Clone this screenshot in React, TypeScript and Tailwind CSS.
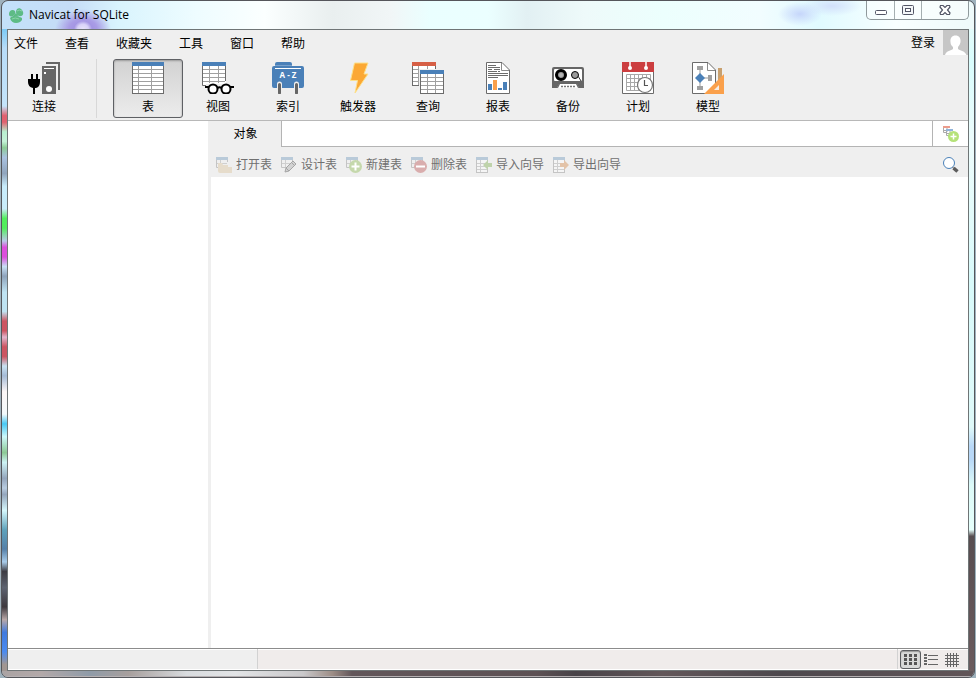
import React from 'react';

const TableIcon = () => (
  <svg viewBox="0 0 32 32" className="w-8 h-8" shapeRendering="crispEdges">
    <rect width="32" height="32" fill="#6b6b6b" />
    <rect x="1" y="4" width="30" height="27" fill="#fff" />
    <rect width="32" height="4" fill="#4a80b8" />
    <path d="M1 7.5H31M1 11.5H31M1 15.5H31M1 19.5H31M1 23.5H31M1 27.5H31M6.5 4V31M19.5 4V31" stroke="#a0a0a0" />
  </svg>
);

const ConnectionIcon = () => (
  <svg viewBox="0 0 32 32" className="w-8 h-8">
    <path d="M18 1H31V28" fill="none" stroke="#666" strokeWidth="2" />
    <rect x="14" y="4" width="14" height="28" fill="#666" />
    <rect x="16" y="6" width="10" height="1" fill="#fff" />
    <rect x="16" y="10" width="2" height="2" fill="#fff" />
    <circle cx="21" cy="27" r="3" fill="#fff" />
    <path d="M3 12H5V17H8V12H10V17H12V20Q12 25 8 26H7V32H5V26Q0 25 0 20V17H3Z" fill="#000" />
  </svg>
);

const ViewIcon = () => (
  <svg viewBox="0 0 32 32" className="w-8 h-8">
    <path d="M0 0H24V23H0Z" fill="#fff" />
    <path d="M.5 4V23.5H4M23.5 4V19" fill="none" stroke="#6b6b6b" />
    <path d="M1 7.5H23M1 11.5H23M1 15.5H23M1 19.5H23M7.5 4V21M16.5 4V21" stroke="#a0a0a0" />
    <rect width="24" height="4" fill="#4a80b8" />
    <path d="M4 22H32V32H4Z" fill="#efefef" />
    <g fill="#fff" stroke="#000" strokeWidth="2">
      <circle cx="11" cy="27" r="4.5" />
      <circle cx="24" cy="27" r="4.5" />
      <path d="M3 25H7M28 25H32M15.5 26Q17.5 24.5 19.5 26" fill="none" />
    </g>
  </svg>
);

const IndexIcon = () => (
  <svg viewBox="0 0 32 32" className="w-8 h-8">
    <path d="M3 4V2Q3 0 5 0H18Q20 0 20 2V4H30Q32 4 32 6V24Q32 26 30 26H2Q0 26 0 24V6Q0 4 2 4Z" fill="#4a80b8" />
    <path d="M3 3.5H20" stroke="#7aa2cc" />
    <path d="M3 6.5H29" stroke="#fff" />
    <text x="16" y="16" textAnchor="middle" fontSize="8" fontWeight="700" fill="#fff" fontFamily="Open Sans, sans-serif">A - Z</text>
    <path d="M7.5 22V30M24.5 22V30" stroke="#efefef" strokeWidth="5" strokeLinecap="round" />
    <path d="M7.5 22.5V31M24.5 22.5V31" stroke="#666" strokeWidth="3" strokeLinecap="round" />
  </svg>
);

const TriggerIcon = () => (
  <svg viewBox="0 0 32 32" className="w-8 h-8">
    <path d="M12.5 1H26L22 12H26L13 31L15.5 18.5H8.5Z" fill="#fba834" stroke="#fde08a" strokeLinejoin="round" />
  </svg>
);

const QueryIcon = () => (
  <svg viewBox="0 0 32 32" className="w-8 h-8" shapeRendering="crispEdges">
    <rect width="24" height="24" fill="#6b6b6b" />
    <rect x="1" y="4" width="22" height="19" fill="#fff" />
    <rect width="24" height="4" fill="#d65f45" />
    <path d="M1 7.5H23M1 11.5H23M1 15.5H23M1 19.5H23M6.5 4V23M15.5 4V8" stroke="#a0a0a0" />
    <rect x="7" y="7" width="25" height="25" fill="#efefef" />
    <rect x="8" y="8" width="24" height="24" fill="#6b6b6b" />
    <rect x="9" y="12" width="22" height="19" fill="#fff" />
    <rect x="8" y="8" width="24" height="4" fill="#4a80b8" />
    <path d="M9 15.5H31M9 19.5H31M9 23.5H31M9 27.5H31M15.5 12V31M23.5 12V31" stroke="#a0a0a0" />
  </svg>
);

const ReportIcon = () => (
  <svg viewBox="0 0 32 32" className="w-8 h-8">
    <path d="M4.5 .5H20L27.5 8V31.5H4.5Z" fill="#fff" stroke="#6b6b6b" />
    <path d="M19.5 1V8.5H27" fill="none" stroke="#8a8a8a" />
    <path d="M6 3.5H14M6 5.5H18M6 7.5H10M12 7.5H18M6 9.5H15M16 9.5H18M6 11.5H26M6 13.5H26M6 15.5H16" stroke="#6b6b6b" />
    <path d="M6 22H10V28H6ZM16 26H20V28H16ZM21 20H25V28H21Z" fill="#4a80b8" />
    <rect x="11" y="18" width="4" height="10" fill="#faa04b" />
  </svg>
);

const BackupIcon = () => (
  <svg viewBox="0 0 32 32" className="w-8 h-8">
    <path d="M2 5H30Q32 5 32 7V26H27L25 22H7L5 26H0V7Q0 5 2 5Z" fill="#666" />
    <rect x="2" y="7" width="28" height="12" rx="1" fill="#fff" />
    <circle cx="9" cy="13" r="4.5" fill="#999" stroke="#000" strokeWidth="3" />
    <circle cx="9" cy="13" r="2" fill="#b5b5b5" />
    <circle cx="23" cy="13" r="3.5" fill="#999" stroke="#000" />
    <path d="M26 14L29 19" stroke="#333" />
    <path d="M5 26L7 21H25L27 26Z" fill="#666" />
    <path d="M8 22H24L26 26H6Z" fill="#fff" />
    <path d="M9 24.5H24" stroke="#777" strokeWidth="1.5" strokeDasharray="2 1" />
  </svg>
);

const ScheduleIcon = () => (
  <svg viewBox="0 0 32 32" className="w-8 h-8">
    <path d="M.5 8V31.5H31.5V8" fill="#fff" stroke="#6b6b6b" />
    <rect width="32" height="10" fill="#cc3e40" />
    <path d="M8 0V6M24 0V6" stroke="#fff" strokeWidth="1.5" />
    <circle cx="8" cy="6" r="2" fill="#fff" />
    <circle cx="24" cy="6" r="2" fill="#fff" />
    <path d="M4.5 12.5H28.5V28.5H4.5ZM4.5 16.5H28M4.5 20.5H28M4.5 24.5H28M8.5 12V28M12.5 12V28M16.5 12V28M20.5 12V28M24.5 12V28" fill="none" stroke="#a8a8a8" />
    <circle cx="23" cy="23" r="7.5" fill="#fff" stroke="#777" strokeWidth="1.2" />
    <path d="M22.5 18V23.5H26" fill="none" stroke="#555" strokeWidth="1.2" />
  </svg>
);

const ModelIcon = () => (
  <svg viewBox="0 0 32 32" className="w-8 h-8">
    <path d="M.5 .5H16L23.5 8V31.5H.5Z" fill="#fff" stroke="#6b6b6b" />
    <path d="M15.5 1V8.5H23" fill="none" stroke="#8a8a8a" />
    <path d="M8 7V26M8 16H17" stroke="#999" />
    <path d="M5 4H11V8H5ZM5 24H11V28H5ZM16 13H20V19H16Z" fill="#a0a0a0" />
    <path d="M8 11L13 16L8 21L3 16Z" fill="#4a80b8" />
    <path d="M26 6H30V20H26Z" fill="#c8a06e" />
    <path d="M12 32L32 12V32Z" fill="#faa04b" />
    <path d="M22 28L27 23V28Z" fill="#f6ede4" />
  </svg>
);

const MiniTable = () => (
  <>
    <path d="M.5 3V10.5H5M11.5 3V5" fill="none" stroke="#c4c4c4" />
    <path d="M1 6.5H11M4.5 3V10" stroke="#cfcfcf" />
    <rect width="12" height="3" fill="#b9cad9" />
  </>
);

const SheetTable = () => (
  <>
    <rect x=".5" y=".5" width="11" height="15" fill="#f5f5f5" stroke="#c4c4c4" />
    <path d="M1 6.5H11M1 9.5H11M1 12.5H11M4.5 3V15" stroke="#cfcfcf" />
    <rect width="12" height="3" fill="#b9cad9" />
  </>
);

const SmallIcon = ({ children }: { children: React.ReactNode }) => (
  <svg viewBox="0 0 16 16" className="w-4 h-4">{children}</svg>
);

const menus = ['文件', '查看', '收藏夹', '工具', '窗口', '帮助'];

const tools = [
  { label: '表', icon: TableIcon, active: true },
  { label: '视图', icon: ViewIcon },
  { label: '索引', icon: IndexIcon },
  { label: '触发器', icon: TriggerIcon },
  { label: '查询', icon: QueryIcon },
  { label: '报表', icon: ReportIcon },
  { label: '备份', icon: BackupIcon },
  { label: '计划', icon: ScheduleIcon },
  { label: '模型', icon: ModelIcon }
];

const actions = [
  {
    label: '打开表',
    icon: <><MiniTable /><path d="M2 6H6L7 8H12V10H16V16H4Q2 16 2 14Z" fill="#e6dccb" /></>
  },
  {
    label: '设计表',
    icon: <><MiniTable /><path d="M4 15L5 11L12 4L15 7L8 14Z" fill="#d2d2d2" stroke="#a5a5a5" /><path d="M5 11L8 14M10.5 5.5L13.5 8.5" stroke="#a5a5a5" /></>
  },
  {
    label: '新建表',
    icon: <><MiniTable /><circle cx="9.5" cy="9.5" r="6.5" fill="#c5d8ac" /><path d="M9.5 5.5V13.5M5.5 9.5H13.5" stroke="#fff" strokeWidth="2" /></>
  },
  {
    label: '删除表',
    icon: <><MiniTable /><circle cx="9.5" cy="9.5" r="6.5" fill="#d9adad" /><path d="M5 9.5H14" stroke="#fff" strokeWidth="2" /></>
  },
  {
    label: '导入向导',
    icon: <><SheetTable /><path d="M7 8L12 3V6H16V10H12V13Z" fill="#bfd3ab" /></>
  },
  {
    label: '导出向导',
    icon: <><SheetTable /><path d="M16 8L11 3V6H7V10H11V13Z" fill="#e3c3a8" /></>
  }
];

const TitleBar = () => (
  <header className="flex h-7 shrink-0 items-start rounded-t-md bg-[radial-gradient(ellipse_9px_8px_at_81px_28px,#e8e4fb_0,#d8d2f8_60%,transparent_100%),radial-gradient(ellipse_28px_20px_at_81px_28px,#9a8ade_0,#a99ce6_50%,#c8c0f200_100%),radial-gradient(ellipse_22px_12px_at_798px_13px,#c6d6fb_0,transparent_100%),radial-gradient(ellipse_30px_10px_at_830px_5px,#d2e0fb_0,transparent_100%),linear-gradient(90deg,#c3e1fa_0%,#c5dcf6_7%,#d9f4fd_12%,#eefcff_20%,#fbffff_27%,#e9efef_34%,#f1f6f7_40%,#eaffff_44%,#ebffff_50%,#e2f0f3_54%,#eefafa_60%,#ecfffd_68%,#f2fdff_78%,#e0faff_84%,#f8ffff_92%,#eefafa_100%)]">
    <div className="flex items-center gap-1 pl-1.5 pt-1">
      <svg viewBox="0 0 17 17" className="w-[17px] h-[17px]">
        <path d="M1 7C1 3 5 2 7 4C8 6 7 8 5 9C2 10 1 9 1 7ZM8 5C8 1 12 0 14 3C17 7 14 10 11 9C9 8 8 7 8 5ZM2 11C5 8 8 9 11 10C15 10 15 13 12 15C8 17 3 16 2 11Z" fill="#5dbb85" />
        <path d="M5 9L8 6L11 10Z" fill="#5dbb85" />
        <path d="M9 4Q11 2 14 4M4 12Q7 10 11 12" fill="none" stroke="#8ad3a8" />
      </svg>
      <h1 className="text-xs leading-5 text-black">Navicat for SQLite</h1>
    </div>
    <div className="ml-auto mr-[5px] flex h-[19px] overflow-hidden rounded-b-[5px] border border-t-0 border-[#8f999c] bg-white/40">
      <button aria-label="最小化" className="flex w-7 items-center justify-center border-r border-[#a5afb1]">
        <svg viewBox="0 0 12 12" className="mt-1 w-3 h-3"><rect x=".5" y="4.5" width="11" height="4" rx="1" fill="#fff" stroke="#535666" /></svg>
      </button>
      <button aria-label="最大化" className="flex w-[27px] items-center justify-center border-r border-[#a5afb1]">
        <svg viewBox="0 0 12 10" className="w-3 h-2.5"><rect x=".5" y=".5" width="11" height="9" rx="1" fill="#f4f7f9" stroke="#535666" /><rect x="3.5" y="3.5" width="5" height="3" fill="#fff" stroke="#535666" /></svg>
      </button>
      <button aria-label="关闭" className="flex w-[46px] items-center justify-center">
        <svg viewBox="0 0 12 10" className="w-3 h-2.5"><path d="M1.5 .5H4L6 2.5L8 .5H10.5L11 2L8.500 5L11 8L10.500 9.500H8L6 7.500L4 9.500H1.500L1 8L3.500 5L1 2Z" fill="#fff" stroke="#535666" strokeWidth="1.2" /></svg>
      </button>
    </div>
  </header>
);

const App: React.FC = () => {
  return (
    <div className="h-screen bg-[#9fb2bd] px-px text-xs text-black font-['Open_Sans','Noto_Sans_CJK_SC',sans-serif]">
      <div className="flex h-full flex-col overflow-hidden rounded-[7px] border border-[#55565b]">
        <TitleBar />

        <div className="flex min-h-0 flex-1">
          {/* Glass frame, left edge */}
          <div className="w-[5px] shrink-0 bg-[linear-gradient(180deg,#7ccaf5_0%,#b8dcf8_3%,#c4e4fa_12%,#e0616f_13.5%,#e0616f_14.5%,#b9efd0_16%,#c5f2d8_17.5%,#8ccb96_18.5%,#a9c2e0_20%,#90a5bd_22.5%,#c8ecfb_24.5%,#c9ecfa_28%,#52ee5c_29.5%,#52ee5c_31%,#b9c9e8_33%,#dc4fdc_34%,#dc4fdc_35.5%,#c8e0f5_37%,#8ea3bb_38.5%,#bfe3f2_41%,#bfe3f2_44%,#cc5562_45.5%,#cc5562_47%,#e2b4cc_48%,#cc5562_49.5%,#cc5562_51%,#c9e2f2_52.5%,#a5bbd6_54%,#fbf6f6_56.5%,#f3f9fb_60%,#48c8f3_61.5%,#cdf8fa_63.5%,#8cc994_66%,#cdf3f5_67.5%,#94a6bd_70%,#b8cce0_71.5%,#94a6bd_72.5%,#d5f7fc_75%,#5fa2bb_78%,#5580a8_81%,#a8ccea_83%,#3d3c43_84.5%,#5d6370_87%,#3e393e_90%,#b8a8a8_92%,#3f7ade_94%,#4b8bf0_97%,#a09692_99%,#a09692_100%)]" />

          <div className="flex min-w-0 flex-1 flex-col border border-[#6f7576] bg-[#efefef]">
            {/* Menu */}
            <nav className="flex h-[27px] shrink-0 items-center gap-[27px] pl-1.5">
              {menus.map((menu) => (
                <button key={menu} className="leading-4">{menu}</button>
              ))}
              <div className="ml-auto flex items-start gap-2 self-start">
                <button className="pt-1 leading-[18px]">登录</button>
                <svg viewBox="0 0 25 25" className="w-[25px] h-[25px]">
                  <rect width="25" height="25" fill="#c6c6c6" />
                  <path d="M12.5 5.5C16 5.5 18 8 17.5 12C17 15 15.5 16 15 17V19C18 21 22 21 23.5 25H2C3 21 7 21 10 19V17C9 16 7.5 15 7.5 12C7 8 9 5.5 12.5 5.5Z" fill="#fff" />
                </svg>
              </div>
            </nav>

            {/* Main toolbar */}
            <div className="flex h-16 shrink-0 border-b border-[#b8b8b8] py-0.5">
              <button className="flex w-[72px] flex-col items-center pt-[3px]">
                <ConnectionIcon />
                <span className="mt-[5px] leading-4">连接</span>
              </button>
              <div className="mx-4 w-px bg-[#d8d8d8]" />
              {tools.map((tool) => {
                const Icon = tool.icon;
                return (
                  <button
                    key={tool.label}
                    className={
                      tool.active
                        ? 'flex w-[70px] flex-col items-center rounded-[3px] border border-[#5e6064] bg-linear-to-b from-[#d2d2d2] to-[#ececec] pt-0.5 shadow-[inset_0_1px_2px_#9a9a9a]'
                        : 'flex w-[70px] flex-col items-center pt-[3px]'
                    }
                  >
                    <Icon />
                    <span className="mt-[5px] leading-4">{tool.label}</span>
                  </button>
                );
              })}
            </div>

            {/* Workspace */}
            <div className="flex min-h-0 flex-1">
              <aside className="w-[200px] shrink-0 bg-white" />
              <main className="flex min-w-0 flex-1 flex-col">
                <div className="flex h-[26px] shrink-0">
                  <button className="w-[73px] pl-0.5 leading-4">对象</button>
                  <div className="flex-1 border-b border-l border-[#b4b4b4] bg-white" />
                  <button aria-label="新建" className="flex w-9 items-center justify-center border-b border-l border-[#b4b4b4] bg-white">
                    <svg viewBox="0 0 16 16" className="w-4 h-4">
                      <path d="M.5 2V6.5H4M4 2V6M1 4.5H6" fill="none" stroke="#aaa" />
                      <rect width="7" height="2" fill="#eb9c8c" />
                      <path d="M3.5 5V9.5H7M7 5V8M4 7.5H10" fill="none" stroke="#aaa" />
                      <rect x="3" y="3" width="7" height="2" fill="#91b4da" />
                      <circle cx="10.5" cy="10.5" r="5.5" fill="#b5e279" />
                      <path d="M10.5 7.5V13.5M7.5 10.5H13.5" stroke="#fff" strokeWidth="1.5" />
                    </svg>
                  </button>
                </div>
                <div className="flex h-[30px] shrink-0 items-center gap-[9px] pl-2 pr-[9px] pt-1.5 text-[#707070]">
                  {actions.map((action) => (
                    <button key={action.label} disabled className="flex items-center gap-1 whitespace-nowrap leading-4">
                      <SmallIcon>{action.icon}</SmallIcon>
                      {action.label}
                    </button>
                  ))}
                  <button aria-label="搜索" className="ml-auto">
                    <svg viewBox="0 0 16 16" className="w-4 h-4">
                      <circle cx="6" cy="6" r="5.5" fill="#fff" stroke="#4a80b8" />
                      <path d="M9.5 10L11 11.5" stroke="#666" />
                      <path d="M10.5 11L14.5 14.5" stroke="#5c5c5c" strokeWidth="3.5" />
                    </svg>
                  </button>
                </div>
                <section className="ml-[3px] flex-1 bg-white" />
              </main>
            </div>

            {/* Status bar */}
            <footer className="flex h-[22px] shrink-0 border-b border-t border-b-white border-t-[#8c8c8c]">
              <div className="w-[249px] shrink-0 border-t border-white" />
              <div className="w-px shrink-0 bg-[#d2d2d2]" />
              <div className="flex-1 border-t border-white bg-[#f0eceb]" />
              <div className="w-px shrink-0 bg-[#d2d2d2]" />
              <div className="flex items-center gap-[3px] border-t border-white bg-[#f0eceb] pl-0.5 pr-[9px]">
                <button aria-label="列表" className="flex h-[19px] w-[21px] items-center justify-center rounded-[3px] border border-[#5b5d60] bg-[#d8d9d8] shadow-[inset_0_1px_1px_#9a9a9a]">
                  <svg viewBox="0 0 13 11" className="w-[13px] h-[11px]" shapeRendering="crispEdges">
                    <path d="M0 1.5H13M0 5.5H13M0 9.5H13" stroke="#555" strokeWidth="3" strokeDasharray="3 2" />
                  </svg>
                </button>
                <button aria-label="详细信息">
                  <svg viewBox="0 0 14 12" className="w-3.5 h-3" shapeRendering="crispEdges">
                    <path d="M0 1H3M0 4H3M0 7H3M0 10H3" stroke="#666" strokeWidth="2" />
                    <path d="M4 1.5H14M4 5.5H14M4 10.5H14" stroke="#666" />
                  </svg>
                </button>
                <button aria-label="ER 图表" className="pl-1">
                  <svg viewBox="0 0 14 14" className="w-3.5 h-3.5" shapeRendering="crispEdges">
                    <path d="M0 2.5H14M0 5.5H14M0 8.5H14M0 11.5H14M2.5 0V14M5.5 0V14M8.5 0V14M11.5 0V14" stroke="#666" />
                  </svg>
                </button>
              </div>
            </footer>
          </div>

          {/* Glass frame, right edge */}
          <div className="w-[5px] shrink-0 bg-[linear-gradient(180deg,#e4fbfa_0%,#d9fdfd_5%,#edfcfc_18%,#d8fafa_40%,#dff9f9_62%,#b8d8f7_65%,#b8d8f7_67%,#dcfaf8_71%,#e6fffb_78%,#574d50_79%,#6a5b5e_100%)]" />
        </div>

        {/* Glass frame, bottom edge */}
        <div className="h-1.5 shrink-0 border-b border-[#b5b0b2] bg-[linear-gradient(90deg,#aaa3a3_0%,#b3a9a9_4%,#8f9ba8_9%,#a79f9d_13%,#d9dcdf_19%,#e2e4e6_24%,#c9c8ca_31%,#9d8d86_34%,#62565a_36%,#5d5154_55%,#484348_59%,#625659_68%,#4d484d_80%,#615558_100%)]" />
      </div>
    </div>
  );
};

export default App;
